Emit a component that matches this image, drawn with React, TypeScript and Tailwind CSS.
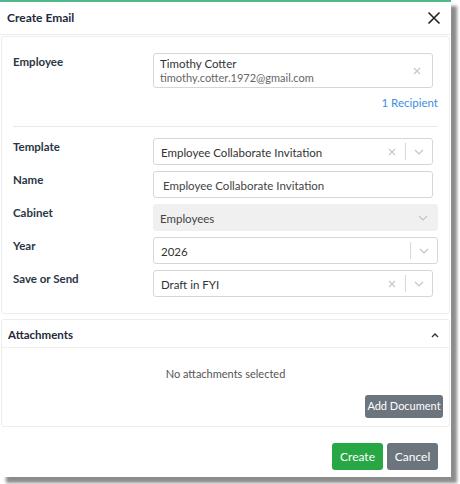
import React from "react";

const font = { fontFamily: "Lato, 'Open Sans', sans-serif" };

function Chevron() {
  return (
    <svg width="10" height="6" viewBox="0 0 10 6">
      <path d="M1 1l4 4 4-4" fill="none" stroke="#c4c4c4" strokeWidth="1.2" />
    </svg>
  );
}

function Clear() {
  return (
    <svg width="8" height="8" viewBox="0 0 8 8">
      <path d="M1 1l6 6M7 1l-6 6" stroke="#c8c8c8" strokeWidth="1.2" />
    </svg>
  );
}

function Label({ children }: { children: React.ReactNode }) {
  return <div className="w-[140px] shrink-0 pt-[2px] text-[11.5px] leading-[14px] font-bold text-[#2b3645]">{children}</div>;
}

function Select({ value, clear, wide }: { value: string; clear?: boolean; wide?: boolean }) {
  return (
    <div className={`flex h-[27px] items-center rounded-[3px] border border-[#d6d6d6] bg-white pl-[7px] ${wide ? "w-[285px]" : "w-[280px]"}`}>
      <span className="flex-1 pt-[2px] text-[11.5px] text-[#333]">{value}</span>
      {clear && (
        <span className="flex w-[18px] justify-center">
          <Clear />
        </span>
      )}
      <span className="mx-[4px] h-[17px] w-px bg-[#d8d8d8]" />
      <span className="flex w-[22px] justify-center pr-[4px]">
        <Chevron />
      </span>
    </div>
  );
}

export default function App() {
  return (
    <div className="h-[484px] w-[460px] bg-white" style={font}>
      <div className="flex h-[477px] w-[451px] flex-col border-t-2 border-[#4fb989] bg-white shadow-[6px_6px_3px_rgba(0,0,0,0.45)]">
        <div className="flex h-[33px] items-center justify-between border-b border-[#ededed] pl-[7px] pr-[10px]">
          <span className="text-[12px] font-bold text-[#1f2b3a]">Create Email</span>
          <svg width="14" height="14" viewBox="0 0 14 14">
            <path d="M1.5 1.5l11 11M12.5 1.5l-11 11" stroke="#222" strokeWidth="1.6" />
          </svg>
        </div>

        <div className="mx-[1px] mt-[1px] flex h-[278px] flex-col rounded-[3px] border border-[#ededed] px-[11px] pt-[16px]">
          <div className="flex">
            <Label>Employee</Label>
            <div className="flex h-[35px] w-[280px] items-center rounded-[3px] border border-[#d6d6d6] pl-[6px] pr-[11px]">
              <div className="flex-1 leading-[14px]">
                <div className="text-[11.5px] text-[#333]">Timothy Cotter</div>
                <div className="text-[11px] text-[#666]">timothy.cotter.1972@gmail.com</div>
              </div>
              <Clear />
            </div>
          </div>
          <div className="mt-[7px] text-right text-[11.5px] leading-[16px] text-[#3c8fe3]">1 Recipient</div>
          <div className="mt-[15px] h-px bg-[#e9e9e9]" />

          <div className="mt-[11px] flex flex-col gap-[6px]">
            <div className="flex">
              <Label>Template</Label>
              <Select value="Employee Collaborate Invitation" clear />
            </div>
            <div className="flex">
              <Label>Name</Label>
              <div className="flex h-[27px] w-[280px] items-center rounded-[3px] border border-[#d6d6d6] pl-[9px] pt-[2px] text-[11.5px] text-[#444]">
                Employee Collaborate Invitation
              </div>
            </div>
            <div className="flex">
              <Label>Cabinet</Label>
              <div className="flex h-[27px] w-[285px] items-center rounded-[3px] bg-[#f0f0f0] pl-[7px]">
                <span className="flex-1 pt-[2px] text-[11.5px] text-[#444]">Employees</span>
                <span className="flex w-[26px] justify-center pr-[4px]">
                  <Chevron />
                </span>
              </div>
            </div>
            <div className="flex">
              <Label>Year</Label>
              <Select value="2026" wide />
            </div>
            <div className="flex">
              <Label>Save or Send</Label>
              <Select value="Draft in FYI" clear />
            </div>
          </div>
        </div>

        <div className="mx-[1px] mt-[5px] flex h-[108px] flex-col rounded-[3px] border border-[#ededed]">
          <div className="flex h-[28px] items-center justify-between border-b border-[#efefef] pl-[6px] pr-[10px] pt-[2px]">
            <span className="text-[11.5px] font-bold text-[#1f2b3a]">Attachments</span>
            <svg width="8" height="6" viewBox="0 0 8 6">
              <path d="M1 5l3-3 3 3" fill="none" stroke="#333" strokeWidth="1.4" />
            </svg>
          </div>
          <div className="mt-[18px] text-center text-[11px] text-[#555]">No attachments selected</div>
          <div className="mt-[12px] flex justify-end pr-[6px]">
            <button className="h-[23px] w-[78px] rounded-[3px] bg-[#6c757d] text-[11px] text-white">Add Document</button>
          </div>
        </div>

        <div className="mt-[16px] flex justify-end gap-[4px] pr-[13px]">
          <button className="h-[27px] w-[51px] rounded-[3px] bg-[#28a745] text-[12px] text-white">Create</button>
          <button className="h-[27px] w-[51px] rounded-[3px] bg-[#6c757d] text-[12px] text-white">Cancel</button>
        </div>
      </div>
    </div>
  );
}
